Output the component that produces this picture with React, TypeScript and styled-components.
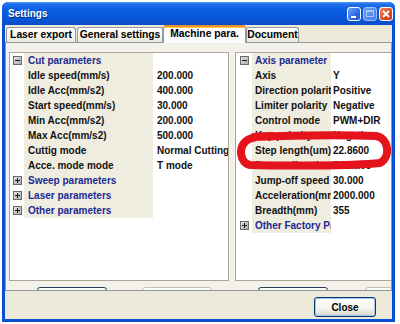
import React from "react";
import styled, { createGlobalStyle, css } from "styled-components";

const Global = createGlobalStyle`
  html, body { margin: 0; padding: 0; background: #ffffff; }
  body { font-family: "Liberation Sans", Arial, sans-serif; }
  * { box-sizing: border-box; }
`;

const Window = styled.div`
  margin: 2px 0 0 2px;
  width: 393px;
  height: 320px;
  display: flex;
  flex-direction: column;
  border-radius: 6px 6px 0 0;
  overflow: hidden;
  background: #0b4fd4;
`;

const TitleBar = styled.div`
  height: 23px;
  flex: none;
  display: flex;
  align-items: center;
  padding: 0 2px 0 6px;
  background: linear-gradient(#4a96f8 0%, #1f6fec 10%, #0a5de0 35%, #0857dc 70%, #0a4cc6 100%);
`;

const Title = styled.div`
  flex: 1;
  color: #ffffff;
  font-weight: bold;
  font-size: 10px;
  text-shadow: 1px 1px 0 #0a2a80;
`;

const CaptionButtons = styled.div`
  display: flex;
  gap: 2px;
`;

const CaptionButton = styled.div<{ $kind: "min" | "max" | "close" }>`
  width: 14px;
  height: 14px;
  border: 1px solid #ffffff;
  border-radius: 3px;
  position: relative;
  display: flex;
  align-items: center;
  justify-content: center;
  ${(p) =>
    p.$kind === "close"
      ? css`
          background: linear-gradient(135deg, #f08a6a 0%, #e0502a 50%, #c7391a 100%);
        `
      : p.$kind === "max"
      ? css`
          background: linear-gradient(135deg, #7aa8f6 0%, #5488ee 100%);
          border-color: #b8cff7;
          opacity: 0.85;
        `
      : css`
          background: linear-gradient(135deg, #6ea4f8 0%, #2d6ae6 60%, #1f57d4 100%);
        `}
`;

const MinBar = styled.div`
  position: absolute;
  left: 3px;
  bottom: 2px;
  width: 5px;
  height: 2px;
  background: #ffffff;
`;

const MaxBox = styled.div`
  width: 8px;
  height: 7px;
  border: 1px solid #c8d8f8;
  border-top-width: 2px;
`;

const Body = styled.div`
  flex: 1;
  display: flex;
  flex-direction: column;
  background: #ece9d8;
  margin: 0 3px 3px 3px;
`;

const TabStrip = styled.div`
  height: 17px;
  flex: none;
  display: flex;
  align-items: flex-end;
  padding-left: 1px;
  position: relative;
  z-index: 1;
`;

const Tab = styled.div<{ $w: number; $ml?: number; $active?: boolean }>`
  width: ${(p) => p.$w}px;
  margin-left: ${(p) => p.$ml ?? 0}px;
  height: 15px;
  border: 1px solid #919b9c;
  border-bottom: none;
  border-radius: 3px 3px 0 0;
  display: flex;
  align-items: center;
  justify-content: center;
  padding-bottom: 1px;
  font-weight: bold;
  font-size: 10.3px;
  color: #000000;
  white-space: nowrap;
  background: linear-gradient(#ffffff 0%, #f4f3ee 60%, #e9e7dc 100%);
  ${(p) =>
    p.$active &&
    css`
      height: 18px;
      margin-bottom: -1px;
      background: #fcfcfe;
      border-top: 2px solid #e8912e;
      box-shadow: inset 0 1px 0 #ffc94a;
      padding-bottom: 4px;
    `}
`;

const Panel = styled.div`
  height: 249px;
  flex: none;
  border: 1px solid #919b9c;
  background: #f3f1e9;
  overflow: hidden;
  padding: 9px 0 0 3px;
  display: flex;
  flex-direction: column;
`;

const GridsRow = styled.div`
  display: flex;
  gap: 6px;
  height: 229px;
  flex: none;
`;

const Grid = styled.div<{ $w: number }>`
  width: ${(p) => p.$w}px;
  flex: none;
  border: 1px solid #aaa797;
  background: #ffffff;
  display: flex;
  flex-direction: column;
  position: relative;
`;

const Row = styled.div<{ $icon: number; $label: number }>`
  display: grid;
  grid-template-columns: ${(p) => p.$icon}px ${(p) => p.$label}px 1fr;
  height: 15px;
  flex: none;
`;

const IconCell = styled.div`
  display: flex;
  align-items: center;
  justify-content: center;
`;

const LabelCell = styled.div<{ $pad: number; $header?: boolean }>`
  background: #efece0;
  padding-left: ${(p) => p.$pad}px;
  font-weight: bold;
  font-size: 10px;
  line-height: 15px;
  white-space: nowrap;
  overflow: hidden;
  color: ${(p) => (p.$header ? "#1d2a92" : "#111111")};
`;

const ValueCell = styled.div<{ $pad: number }>`
  padding-left: ${(p) => p.$pad}px;
  font-weight: bold;
  font-size: 10px;
  line-height: 15px;
  white-space: nowrap;
  overflow: hidden;
  color: #111111;
`;

const ButtonsRow = styled.div`
  display: flex;
  margin-top: 6px;
  height: 22px;
  flex: none;
`;

const HiddenButton = styled.div<{ $ml: number; $dark?: boolean }>`
  width: 70px;
  height: 22px;
  flex: none;
  margin-left: ${(p) => p.$ml}px;
  border: 1px solid ${(p) => (p.$dark ? "#2a3c5a" : "#c4c1b3")};
  border-radius: 3px;
  background: #fbfbf8;
`;

const Footer = styled.div`
  flex: 1;
  display: flex;
  justify-content: flex-end;
  align-items: flex-start;
  padding: 6px 16px 0 0;
`;

const CloseButton = styled.div`
  width: 62px;
  height: 20px;
  border: 1px solid #003c74;
  border-radius: 3px;
  background: linear-gradient(#ffffff 0%, #f4f3ee 60%, #d8d4c8 100%);
  box-shadow: inset 0 0 0 1px #a9c5f2;
  display: flex;
  align-items: center;
  justify-content: center;
  font-weight: bold;
  font-size: 10px;
  color: #000000;
`;

const Marker = styled.svg`
  position: absolute;
  left: 0;
  top: 0;
  overflow: visible;
  pointer-events: none;
`;

const ExpandIcon = ({ open }: { open: boolean }) => (
  <svg width="9" height="9" viewBox="0 0 9 9">
    <defs>
      <linearGradient id="eg" x1="0" y1="0" x2="1" y2="1">
        <stop offset="0" stopColor="#e6e6e6" />
        <stop offset="1" stopColor="#a8a8a8" />
      </linearGradient>
    </defs>
    <rect x="0.5" y="0.5" width="8" height="8" fill="url(#eg)" stroke="#6b6b6b" />
    <line x1="2" y1="4.5" x2="7" y2="4.5" stroke="#1a1a1a" />
    {!open && <line x1="4.5" y1="2" x2="4.5" y2="7" stroke="#1a1a1a" />}
  </svg>
);

type Item = { header?: boolean; open?: boolean; label: string; value?: string };

const leftItems: Item[] = [
  { header: true, open: true, label: "Cut parameters" },
  { label: "Idle speed(mm/s)", value: "200.000" },
  { label: "Idle Acc(mm/s2)", value: "400.000" },
  { label: "Start speed(mm/s)", value: "30.000" },
  { label: "Min Acc(mm/s2)", value: "200.000" },
  { label: "Max Acc(mm/s2)", value: "500.000" },
  { label: "Cuttig mode", value: "Normal Cutting" },
  { label: "Acce. mode mode", value: "T mode" },
  { header: true, label: "Sweep parameters" },
  { header: true, label: "Laser parameters" },
  { header: true, label: "Other parameters" },
];

const rightItems: Item[] = [
  { header: true, open: true, label: "Axis parameter" },
  { label: "Axis", value: "Y" },
  { label: "Direction polarity", value: "Positive" },
  { label: "Limiter polarity", value: "Negative" },
  { label: "Control mode", value: "PWM+DIR" },
  { label: "Key polarity", value: "Negative" },
  { label: "Step length(um)", value: "22.8600" },
  { label: "Datum direction", value: "Positive" },
  { label: "Jump-off speed", value: "30.000" },
  { label: "Acceleration(mm/s2)", value: "2000.000" },
  { label: "Breadth(mm)", value: "355" },
  { header: true, label: "Other Factory Parameters" },
];

const PropertyGrid = ({
  items,
  width,
  icon,
  label,
  labelPad,
  valuePad,
  children,
}: {
  items: Item[];
  width: number;
  icon: number;
  label: number;
  labelPad: number;
  valuePad: number;
  children?: React.ReactNode;
}) => (
  <Grid $w={width}>
    {items.map((it, i) => (
      <Row key={i} $icon={icon} $label={label}>
        <IconCell>{it.header && <ExpandIcon open={!!it.open} />}</IconCell>
        <LabelCell $pad={labelPad} $header={it.header}>
          {it.label}
        </LabelCell>
        <ValueCell $pad={valuePad}>{it.value ?? ""}</ValueCell>
      </Row>
    ))}
    {children}
  </Grid>
);

export default function App() {
  return (
    <>
      <Global />
      <Window>
        <TitleBar>
          <Title>Settings</Title>
          <CaptionButtons>
            <CaptionButton $kind="min">
              <MinBar />
            </CaptionButton>
            <CaptionButton $kind="max">
              <MaxBox />
            </CaptionButton>
            <CaptionButton $kind="close">
              <svg width="8" height="8" viewBox="0 0 8 8">
                <path d="M1 1 L7 7 M7 1 L1 7" stroke="#ffffff" strokeWidth="1.8" />
              </svg>
            </CaptionButton>
          </CaptionButtons>
        </TitleBar>
        <Body>
          <TabStrip>
            <Tab $w={70}>Laser export</Tab>
            <Tab $w={86} $ml={1}>General settings</Tab>
            <Tab $w={83} $active>Machine para.</Tab>
            <Tab $w={53}>Document</Tab>
          </TabStrip>
          <Panel>
            <GridsRow>
              <PropertyGrid items={leftItems} width={220} icon={14} label={129} labelPad={4} valuePad={4} />
              <PropertyGrid items={rightItems} width={180} icon={16} label={79} labelPad={3} valuePad={2}>
                <Marker width="170" height="130">
                  <path
                    d="M 18 84 C 64 82, 114 82, 140 83 C 153 85, 155 104, 144 110 C 114 113, 44 113, 14 112 C 4 110, 2 95, 10 88 C 15 84, 26 83, 36 83"
                    fill="none"
                    stroke="#e5131c"
                    strokeWidth="8"
                    strokeLinecap="round"
                    strokeLinejoin="round"
                  />
                </Marker>
              </PropertyGrid>
            </GridsRow>
            <ButtonsRow>
              <HiddenButton $ml={28} $dark />
              <HiddenButton $ml={35} />
              <HiddenButton $ml={46} $dark />
              <HiddenButton $ml={37} />
            </ButtonsRow>
          </Panel>
          <Footer>
            <CloseButton>Close</CloseButton>
          </Footer>
        </Body>
      </Window>
    </>
  );
}
